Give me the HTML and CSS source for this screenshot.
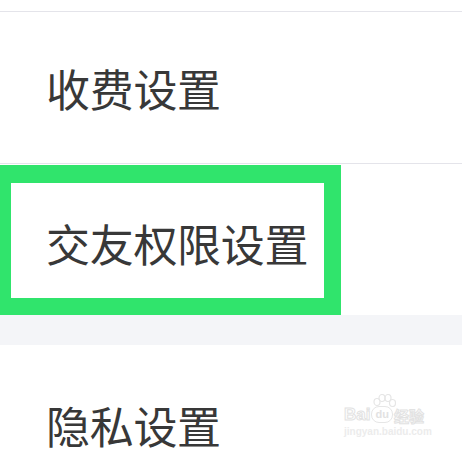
FILE: index.html
```html
<!DOCTYPE html>
<html lang="zh-CN">
<head>
    <meta charset="UTF-8">
    <meta name="viewport" content="width=device-width, initial-scale=1.0">
    <title>设置</title>
    <link rel="stylesheet" href="styles.css">
</head>
<body>
    <div class="page">
        <div class="top-gap"></div>

        <div class="group">
            <div class="row">
                <span class="label">收费设置</span>
            </div>
            <div class="row row-focus">
                <span class="label">交友权限设置</span>
                <div class="highlight"></div>
            </div>
        </div>

        <div class="separator"></div>

        <div class="group">
            <div class="row row-first">
                <span class="label">隐私设置</span>
            </div>
        </div>

        <div class="watermark">
            <div class="wm-logo">
                <span class="wm-bai">Bai</span>
                <span class="wm-du">
                    <svg class="wm-paw" width="24" height="14" viewBox="0 0 24 14">
                        <ellipse cx="5" cy="8" rx="3" ry="3.5" fill="none" stroke="#e6e6e6" stroke-width="1.2"/>
                        <ellipse cx="10" cy="4" rx="3" ry="3.5" fill="none" stroke="#e6e6e6" stroke-width="1.2"/>
                        <ellipse cx="16" cy="4" rx="3" ry="3.5" fill="none" stroke="#e6e6e6" stroke-width="1.2"/>
                        <ellipse cx="20.5" cy="9" rx="3" ry="3.5" fill="none" stroke="#e6e6e6" stroke-width="1.2"/>
                    </svg>
                    du
                </span>
                <span class="wm-jy">经验</span>
            </div>
            <div class="wm-url">jingyan.baidu.com</div>
        </div>
    </div>
</body>
</html>
```

FILE: styles.css
```css
body {
    margin: 0;
    background: #ffffff;
    font-family: "Noto Sans CJK SC", "Noto Sans", sans-serif;
    color: #383838;
}
.page {
    position: relative;
    width: 462px;
    height: 462px;
    overflow: hidden;
}
.top-gap {
    height: 11px;
}
.group {
    background: #ffffff;
}
.row {
    position: relative;
    height: 152px;
    display: flex;
    align-items: center;
    padding-left: 46px;
    border-top: 1px solid #e4e4ea;
    box-sizing: border-box;
}
.row-focus {
    height: 152px;
    padding-top: 6px;
}
.row-first {
    border-top: none;
    height: 158px;
    padding-top: 2px;
}
.label {
    font-size: 44px;
    line-height: 1;
    letter-spacing: -0.3px;
}
.highlight {
    position: absolute;
    left: -6px;
    top: 1px;
    width: 347px;
    height: 150px;
    border: 17px solid #30e46c;
    border-top-width: 18px;
    box-sizing: border-box;
}
.separator {
    height: 30px;
    background: #f4f5f8;
}
.watermark {
    position: absolute;
    left: 344px;
    top: 406px;
    color: #e6e6e6;
    font-family: "Liberation Sans", sans-serif;
}
.wm-logo {
    display: flex;
    align-items: flex-end;
    gap: 1px;
}
.wm-bai {
    font-size: 17px;
    font-weight: bold;
    line-height: 1;
    color: #ffffff;
    -webkit-text-stroke: 1px #e2e2e2;
}
.wm-du {
    position: relative;
    font-size: 11px;
    font-weight: bold;
    line-height: 1;
    color: #e2e2e2;
    border: 1px solid #e6e6e6;
    border-radius: 8px;
    padding: 2px 3px;
}
.wm-paw {
    position: absolute;
    left: 0;
    top: -13px;
}
.wm-jy {
    font-family: "Noto Sans CJK SC", sans-serif;
    font-size: 15px;
    font-weight: bold;
    line-height: 1;
    color: #ffffff;
    -webkit-text-stroke: 1px #e2e2e2;
}
.wm-url {
    margin-top: 3px;
    font-size: 10px;
    font-weight: bold;
    color: #ececec;
}
```
